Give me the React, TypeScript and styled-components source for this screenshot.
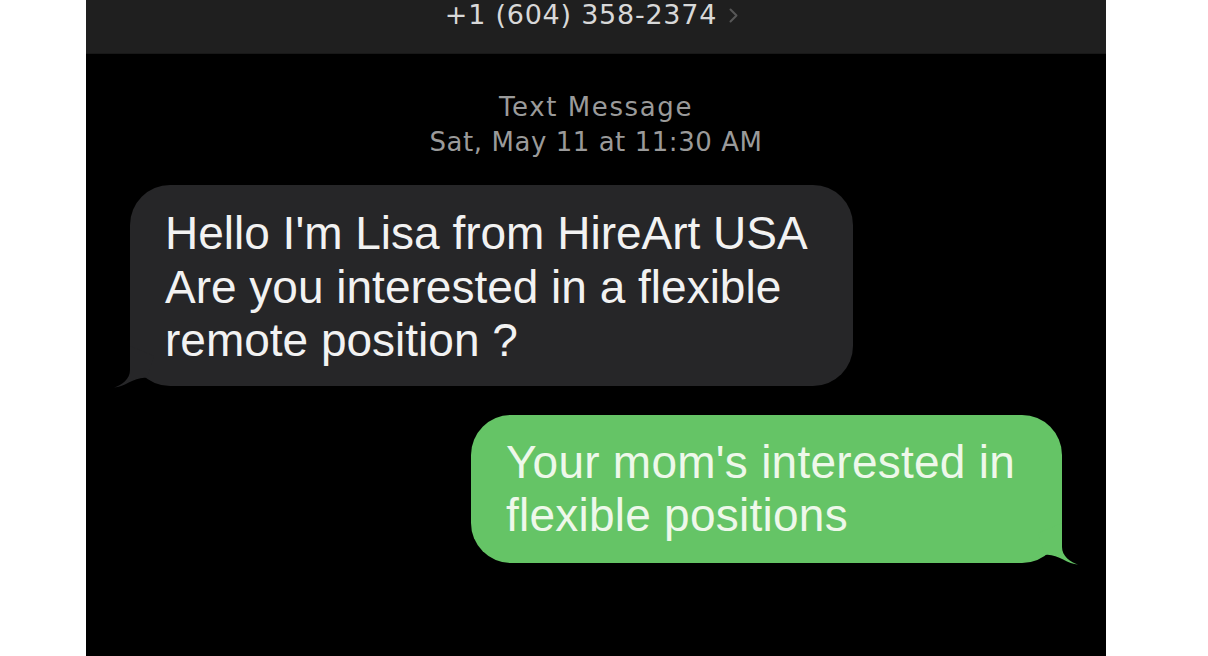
import React from 'react';
import styled, { createGlobalStyle } from 'styled-components';

const GlobalStyle = createGlobalStyle`
  html, body {
    margin: 0;
    padding: 0;
    background: #ffffff;
  }
  body {
    font-family: "Liberation Sans", Arial, sans-serif;
  }
`;

const Page = styled.div`
  width: 1208px;
  height: 656px;
  overflow: hidden;
  background: #ffffff;
`;

const Phone = styled.div`
  width: 1020px;
  height: 656px;
  margin-left: 86px;
  background: #000000;
  display: flex;
  flex-direction: column;
  overflow: hidden;
`;

const Header = styled.header`
  height: 54px;
  flex-shrink: 0;
  background: #1f1f1f;
  border-bottom: 1px solid #181818;
  box-sizing: border-box;
  display: flex;
  justify-content: center;
  align-items: flex-start;
`;

const Contact = styled.div`
  display: flex;
  align-items: center;
  gap: 11px;
  font-family: "DejaVu Sans", "Liberation Sans", sans-serif;
  font-size: 27px;
  line-height: 30px;
  letter-spacing: 0.75px;
  color: #d8d8d8;
  margin-right: 8px;
`;

const Chevron = styled.svg`
  width: 11px;
  height: 17px;
  margin-top: 1px;
`;

const Thread = styled.main`
  flex: 1;
  display: flex;
  flex-direction: column;
  padding: 36px 44px 0;
`;

const Stamp = styled.div`
  display: flex;
  flex-direction: column;
  align-items: center;
  font-family: "DejaVu Sans", "Liberation Sans", sans-serif;
  font-size: 26px;
  line-height: 35px;
  color: #9a9a9a;
  margin-bottom: 25px;
`;

const StampLine = styled.span<{ $spacing: number }>`
  letter-spacing: ${({ $spacing }) => $spacing}px;
`;

const Row = styled.div<{ $out?: boolean }>`
  display: flex;
  justify-content: ${({ $out }) => ($out ? 'flex-end' : 'flex-start')};
  margin-bottom: 29px;
`;

const Bubble = styled.div<{ $out?: boolean }>`
  position: relative;
  background: ${({ $out }) => ($out ? '#65c466' : '#262628')};
  color: ${({ $out }) => ($out ? '#eef8ea' : '#f2f2f2')};
  border-radius: 40px;
  padding: ${({ $out }) => ($out ? '21px 47px 21px 35px' : '22px 45px 18px 35px')};
  font-family: "Liberation Sans", Arial, sans-serif;
  font-size: 46px;
  line-height: ${({ $out }) => ($out ? '53px' : '53.5px')};
  letter-spacing: ${({ $out }) => ($out ? '0.25px' : '0')};
  white-space: pre-line;
`;

const Tail = styled.svg<{ $out?: boolean }>`
  position: absolute;
  bottom: -4px;
  width: 64px;
  height: 48px;
  overflow: visible;
  ${({ $out }) => ($out ? 'right: -20px;' : 'left: -20px; transform: scaleX(-1);')}
`;

const BubbleTail = ({ out, color }: { out?: boolean; color: string }) => (
  <Tail $out={out} viewBox="-44 -44 64 48">
    <path
      d="M0 -40 L0 -16 C0 -7 8 -1 16 1.5 C6 1.5 -6 -10 -17 -8 L-24 -30 Z"
      fill={color}
    />
  </Tail>
);

const messages = [
  {
    out: false,
    text: "Hello I'm Lisa from HireArt USA\nAre you interested in a flexible\nremote position ?",
  },
  {
    out: true,
    text: "Your mom's interested in\nflexible positions",
  },
];

const App: React.FC = () => (
  <>
    <GlobalStyle />
    <Page>
      <Phone>
        <Header>
          <Contact>
            +1 (604) 358-2374
            <Chevron viewBox="0 0 11 17">
              <path d="M2.5 2.5 L8.5 8.5 L2.5 14.5" fill="none" stroke="#575757" strokeWidth="2" strokeLinecap="round" strokeLinejoin="round" />
            </Chevron>
          </Contact>
        </Header>
        <Thread>
          <Stamp>
            <StampLine $spacing={1.6}>Text Message</StampLine>
            <StampLine $spacing={0.55}>Sat, May 11 at 11:30 AM</StampLine>
          </Stamp>
          {messages.map((m, i) => (
            <Row key={i} $out={m.out}>
              <Bubble $out={m.out}>
                {m.text}
                <BubbleTail out={m.out} color={m.out ? '#65c466' : '#262628'} />
              </Bubble>
            </Row>
          ))}
        </Thread>
      </Phone>
    </Page>
  </>
);

export default App;
